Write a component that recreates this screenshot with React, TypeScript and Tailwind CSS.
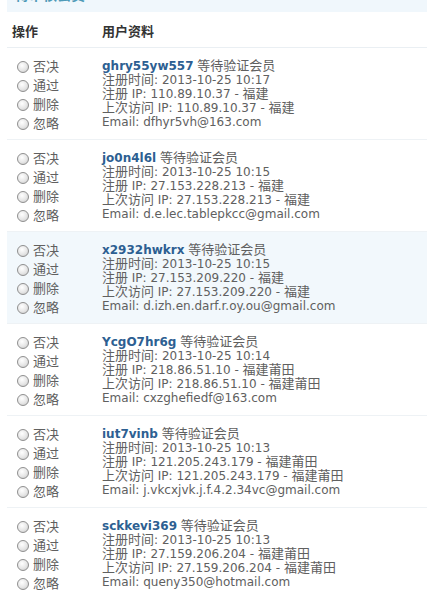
import React from "react";

type User = {
  name: string;
  time: string;
  regIp: string;
  lastIp: string;
  loc: string;
  email: string;
  hl?: boolean;
};

const users: User[] = [
  { name: "ghry55yw557", time: "2013-10-25 10:17", regIp: "110.89.10.37", lastIp: "110.89.10.37", loc: "福建", email: "dfhyr5vh@163.com" },
  { name: "jo0n4l6l", time: "2013-10-25 10:15", regIp: "27.153.228.213", lastIp: "27.153.228.213", loc: "福建", email: "d.e.lec.tablepkcc@gmail.com" },
  { name: "x2932hwkrx", time: "2013-10-25 10:15", regIp: "27.153.209.220", lastIp: "27.153.209.220", loc: "福建", email: "d.izh.en.darf.r.oy.ou@gmail.com", hl: true },
  { name: "YcgO7hr6g", time: "2013-10-25 10:14", regIp: "218.86.51.10", lastIp: "218.86.51.10", loc: "福建莆田", email: "cxzghefiedf@163.com" },
  { name: "iut7vinb", time: "2013-10-25 10:13", regIp: "121.205.243.179", lastIp: "121.205.243.179", loc: "福建莆田", email: "j.vkcxjvk.j.f.4.2.34vc@gmail.com" },
  { name: "sckkevi369", time: "2013-10-25 10:13", regIp: "27.159.206.204", lastIp: "27.159.206.204", loc: "福建莆田", email: "queny350@hotmail.com" },
];

const actions = ["否决", "通过", "删除", "忽略"];

function Radio() {
  return (
    <span className="inline-block w-[12px] h-[12px] rounded-full border border-[#8f8f8f] bg-[radial-gradient(circle_at_40%_35%,#ffffff_0%,#e6e6e6_55%,#c4c4c4_100%)] shrink-0" />
  );
}

function C({ children }: { children: React.ReactNode }) {
  return <span className="text-[13px]">{children}</span>;
}

export default function App() {
  return (
    <div
      className="w-[427px] h-[598px] overflow-hidden bg-white text-[12px] text-[#606060]"
      style={{ fontFamily: '"DejaVu Sans", Verdana, "Noto Sans CJK SC", sans-serif' }}
    >
      <div className="ml-[7px] h-[12px] bg-[#f0f7fc] overflow-hidden">
        <div className="pl-[8px] -mt-[13px] text-[14px] font-bold text-[#4f9ab8] leading-[16px]">待审核会员</div>
      </div>
      <div className="ml-[7px] h-[36px] pt-[4px] flex items-center border-b border-[#eaeff3] font-bold text-[13px] text-[#333]">
        <div className="w-[95px] pl-[5px]">操作</div>
        <div>用户资料</div>
      </div>
      {users.map((u) => (
        <div
          key={u.name}
          className={`ml-[7px] h-[92px] flex border-b border-[#eef2f5] ${u.hl ? "bg-[#f2f8fc]" : "bg-white"}`}
        >
          <div className="w-[95px] pl-[10px] pt-[13px] flex flex-col gap-[7px]">
            {actions.map((a) => (
              <label key={a} className="flex items-center gap-[4px] h-[12px] leading-[12px]">
                <Radio />
                <span className="text-[13px]">{a}</span>
              </label>
            ))}
          </div>
          <div className="pt-[11px] leading-[14px]">
            <div>
              <span className="font-bold text-[#2d5f92]">{u.name}</span> <C>等待验证会员</C>
            </div>
            <div><C>注册时间</C>: {u.time}</div>
            <div><C>注册</C> IP: {u.regIp} - <C>{u.loc}</C></div>
            <div><C>上次访问</C> IP: {u.lastIp} - <C>{u.loc}</C></div>
            <div>Email: {u.email}</div>
          </div>
        </div>
      ))}
    </div>
  );
}
